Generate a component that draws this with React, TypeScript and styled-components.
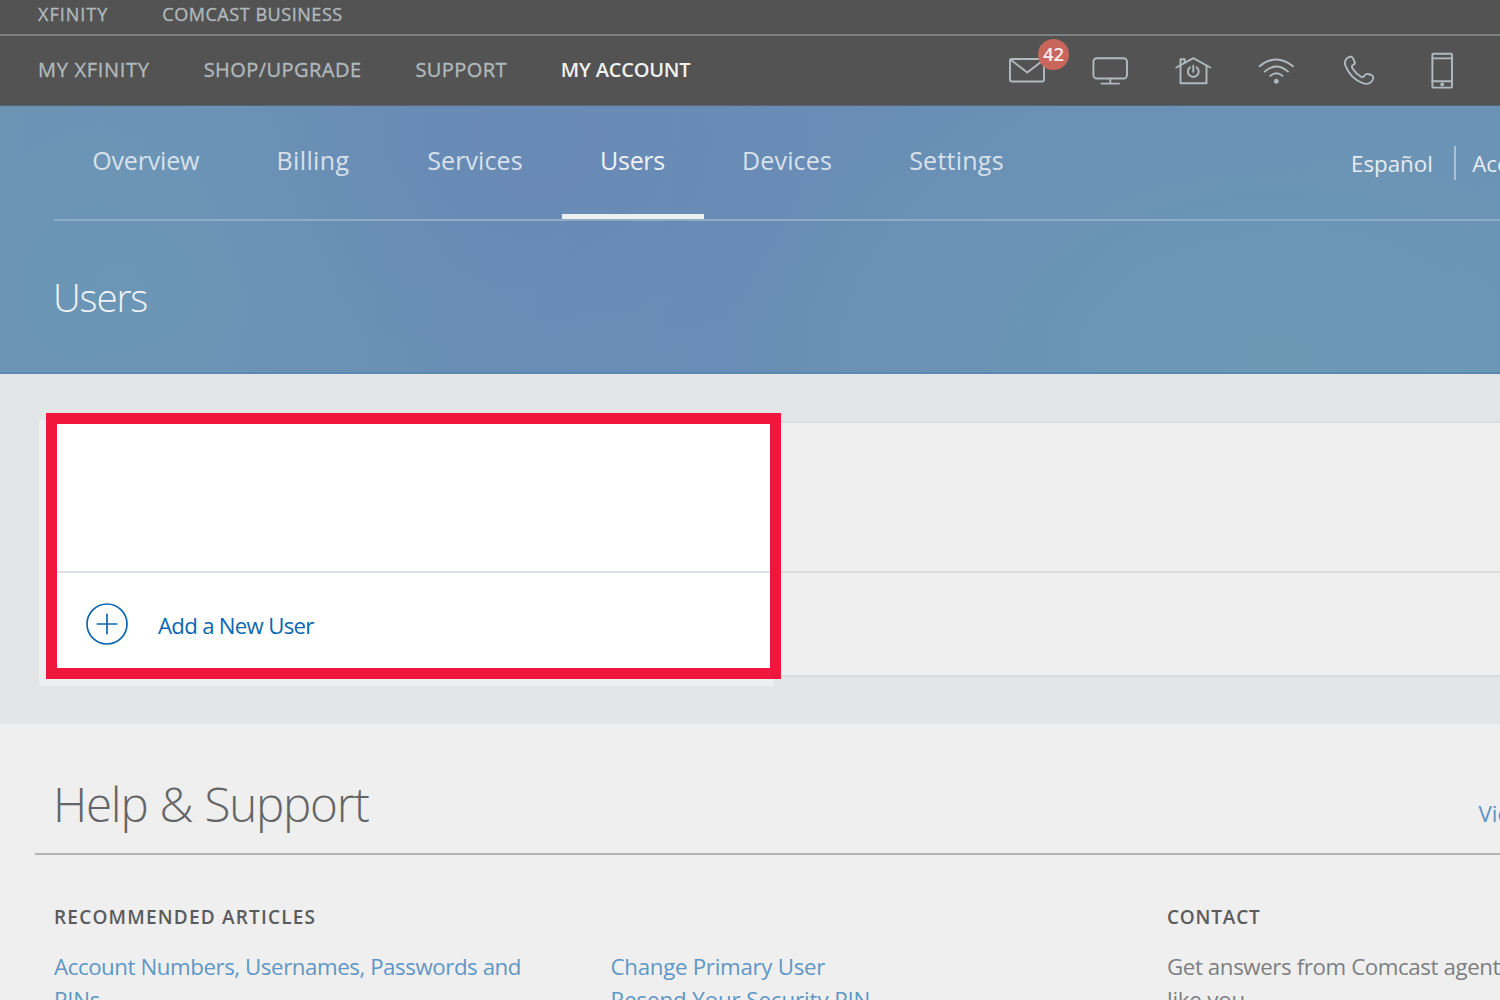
import React from "react";
import styled, { createGlobalStyle } from "styled-components";

const GlobalStyle = createGlobalStyle`
  *, *::before, *::after { box-sizing: border-box; }
  body {
    margin: 0;
    background: #efefef;
    font-family: "Open Sans", "Noto Sans", sans-serif;
  }
  a { color: inherit; text-decoration: none; }
`;

const Page = styled.div`
  width: 100%;
  height: 1000px;
  overflow: hidden;
  display: flex;
  flex-direction: column;
  background: #efefef;
`;

const SiteHeader = styled.header`
  flex: none;
  height: 106px;
  background: #535353;
  color: #b1b9bd;
  border-bottom: 1px solid #566370;
`;

const BrandBar = styled.div`
  display: flex;
  gap: 54px;
  height: 36px;
  padding-left: 38px;
  border-bottom: 2px solid #7c8182;
  font-size: 18px;
  line-height: 29px;
`;

const MainBar = styled.div`
  display: flex;
  justify-content: space-between;
  height: 69px;
  padding: 0 16.5px 0 38px;
`;

const MainNav = styled.nav`
  display: flex;
  gap: 54px;
  font-size: 20px;
  line-height: 68px;
`;

const SpacedLink = styled.a<{ $spacing: number; $active?: boolean }>`
  letter-spacing: ${(p) => p.$spacing}px;
  white-space: nowrap;
  color: ${(p) => (p.$active ? "#f2f2f2" : "inherit")};
  font-weight: ${(p) => (p.$active ? 600 : 400)};
  -webkit-text-stroke: ${(p) => (p.$active ? 0 : 0.35)}px currentColor;
`;

const IconNav = styled.div`
  display: flex;
  padding-top: 15px;
`;

const IconCell = styled.a`
  position: relative;
  width: 83px;
  height: 40px;
  display: flex;
  justify-content: center;
`;

const LineIcon = styled.svg`
  width: 40px;
  height: 40px;
  fill: none;
  stroke: #b1babf;
  stroke-width: 1.9;
  stroke-linecap: round;
  stroke-linejoin: round;
`;

const Badge = styled.span`
  position: absolute;
  left: 52.5px;
  top: -12px;
  width: 31px;
  height: 31px;
  border-radius: 50%;
  background: #c9665c;
  color: #f3eeee;
  font-size: 18.5px;
  font-weight: 600;
  line-height: 30px;
  text-align: center;
`;

const Hero = styled.section`
  flex: none;
  height: 268px;
  padding-left: 54px;
  border-bottom: 2px solid #5a8ab3;
  background:
    radial-gradient(ellipse 340px 300px at 530px 30px, #688ab6 0%, #688ab600 100%),
    radial-gradient(ellipse 340px 280px at 120px 180px, #6c96b5 0%, #6c96b500 100%),
    radial-gradient(ellipse 560px 340px at 1280px 250px, #6c98b4 0%, #6c98b4c0 35%, #6c98b400 100%),
    linear-gradient(100deg, #6c93b5 0%, #698db6 50%, #6b91b6 100%);
`;

const TabBar = styled.div`
  display: flex;
  justify-content: space-between;
  height: 115px;
  border-bottom: 2px solid #8dacc6;
`;

const Tabs = styled.nav`
  display: flex;
  font-size: 25px;
  line-height: 108px;
`;

const Tab = styled.a<{ $width: number; $spacing: number; $active?: boolean }>`
  width: ${(p) => p.$width}px;
  text-align: center;
  letter-spacing: ${(p) => p.$spacing}px;
  color: ${(p) => (p.$active ? "#eff1f3" : "#d8e1ea")};
  border-bottom: ${(p) => (p.$active ? "5px solid #eeeff0" : "0")};
`;

const Utility = styled.div`
  display: flex;
  width: 149px;
  font-size: 22.3px;
  line-height: 115px;
  letter-spacing: 0;
  color: #e8ecf0;
  white-space: nowrap;
`;

const UtilityRule = styled.span`
  flex: none;
  width: 2px;
  height: 34px;
  margin: 40px 16px 0 21.5px;
  background: #aec1d3;
`;

const PageTitle = styled.h1`
  margin: 46px 0 0 -1px;
  font-size: 38.5px;
  font-weight: 300;
  line-height: 61px;
  letter-spacing: -1.1px;
  color: #f0f2f4;
`;

const UsersSection = styled.section`
  flex: none;
  display: flex;
  align-items: flex-start;
  height: 350px;
  padding: 39px 0 0 46px;
  background: #e4e5e7;
`;

const HighlightPanel = styled.div`
  flex: none;
  width: 735px;
  height: 266px;
  border: 11px solid #f0173c;
  background: #fff;
  box-shadow: -7px 7px 0 #eeeff1;
`;

const EmptyRow = styled.div`
  height: 149px;
  border-bottom: 2px solid #dee2e6;
`;

const AddRow = styled.a`
  display: flex;
  align-items: flex-start;
  height: 95px;
  padding: 30px 0 0 29px;
  color: #0b67b2;
`;

const AddIcon = styled.svg`
  width: 42px;
  height: 42px;
  margin-right: 30px;
  fill: none;
  stroke: #0b67b2;
  stroke-width: 1.7;
`;

const AddLabel = styled.span`
  font-size: 22.2px;
  line-height: 45px;
  letter-spacing: -0.7px;
`;

const CardRest = styled.div`
  flex: 1;
  margin-top: 8px;
  height: 256px;
  background: #efefef;
  border: solid #dadcde;
  border-width: 2px 0;
`;

const CardRestRow = styled.div`
  height: 150px;
  border-bottom: 2px solid #dadcde;
`;

const Support = styled.section`
  flex: 1;
  padding-left: 35px;
`;

const SupportHeader = styled.div`
  display: flex;
  justify-content: space-between;
  align-items: baseline;
  height: 131px;
  padding: 46px 0 0 18px;
  border-bottom: 2px solid #b4b4b4;
`;

const SupportTitle = styled.h2`
  margin: 0;
  font-size: 47.5px;
  font-weight: 300;
  line-height: 67px;
  letter-spacing: -1.2px;
  word-spacing: 1px;
  color: #636567;
`;

const ViewLink = styled.a`
  width: 21.5px;
  font-size: 22.3px;
  line-height: 33px;
  white-space: nowrap;
  color: #5a95c8;
`;

const SupportColumns = styled.div`
  display: grid;
  grid-template-columns: 556.5px 556.5px 1fr;
  padding: 47px 0 0 19px;
`;

const Column = styled.div`
  min-width: 0;
`;

const ColumnTitle = styled.h3<{ $spacing?: number }>`
  margin: 0 0 18px;
  height: 30px;
  font-size: 19px;
  font-weight: 600;
  line-height: 30px;
  letter-spacing: ${(p) => p.$spacing ?? 1.2}px;
  color: #5a5b5c;
`;

const TextLine = styled.p<{ $spacing: number; $tone?: "link" | "body" }>`
  margin: 0;
  font-size: 22.3px;
  line-height: 33px;
  letter-spacing: ${(p) => p.$spacing}px;
  white-space: nowrap;
  color: ${(p) => (p.$tone === "body" ? "#7d8082" : "#5f97c6")};
`;

export default function App() {
  return (
    <Page>
      <GlobalStyle />
      <SiteHeader>
        <BrandBar>
          <SpacedLink $spacing={1}>XFINITY</SpacedLink>
          <SpacedLink $spacing={0.55}>COMCAST BUSINESS</SpacedLink>
        </BrandBar>
        <MainBar>
          <MainNav>
            <SpacedLink $spacing={0.7}>MY XFINITY</SpacedLink>
            <SpacedLink $spacing={0.45}>SHOP/UPGRADE</SpacedLink>
            <SpacedLink $spacing={0.4}>SUPPORT</SpacedLink>
            <SpacedLink $spacing={-0.2} $active>MY ACCOUNT</SpacedLink>
          </MainNav>
          <IconNav>
            <IconCell>
              <LineIcon viewBox="0 0 40 40">
                <rect x="3" y="8" width="34" height="22.5" rx="1.5" />
                <path d="M4 9l16.3 12.5L36.5 9" />
              </LineIcon>
              <Badge>42</Badge>
            </IconCell>
            <IconCell>
              <LineIcon viewBox="0 0 40 40">
                <rect x="3.4" y="7.2" width="33.6" height="20.3" rx="3.5" />
                <path d="M20.3 27.5v5M11.4 32.6h17.6" />
              </LineIcon>
            </IconCell>
            <IconCell>
              <LineIcon viewBox="0 0 40 40">
                <path d="M3.3 16.5L20.3 7.2l17 9.3" />
                <path d="M7.5 15v17.3h26V15" />
                <path d="M7.5 13.5V8.3h4.2v2.8" />
                <path d="M17 16.3a5.4 5.4 0 1 0 6.6 0M20.3 14.8v6" />
              </LineIcon>
            </IconCell>
            <IconCell>
              <LineIcon viewBox="0 0 40 40">
                <path d="M3.6 15.2Q20.3 1.6 37 15.2M8.7 20.6Q20.3 10.4 32 20.6M14.3 24.9Q20.3 19.6 26.5 24.9" />
                <circle cx="20.3" cy="30.3" r="2" fill="#b1babf" strokeWidth="1" />
              </LineIcon>
            </IconCell>
            <IconCell>
              <LineIcon viewBox="0 0 40 40">
                <path d="M9.5 6.3C11.3 5.2 13 5.6 14 7.3L15.6 10.6C16.4 12.4 15.6 13.2 14 14C12.6 14.8 12.6 15.8 13.4 17.2C15.6 20.8 19 24 22.4 26C23.6 26.6 24.4 26.2 25.1 25C26 23.4 27.2 22.6 28.8 23L32.4 24C34.2 24.8 34.7 26.6 33.8 28.6C31.8 32.4 28 33.6 23.8 32.2C15.8 29.2 9.4 22 6.4 14.6C5.2 11.2 6.2 8.2 9.5 6.3Z" />
              </LineIcon>
            </IconCell>
            <IconCell>
              <LineIcon viewBox="0 0 40 40">
                <rect x="10.4" y="2.8" width="19.6" height="33.8" rx="0.8" />
                <path d="M10.4 7.4h19.6M10.4 30.2h19.6" />
                <circle cx="20.2" cy="33.5" r="1.3" fill="#b1babf" strokeWidth="1.2" />
              </LineIcon>
            </IconCell>
          </IconNav>
        </MainBar>
      </SiteHeader>

      <Hero>
        <TabBar>
          <Tabs>
            <Tab $width={183.5} $spacing={-0.15}>Overview</Tab>
            <Tab $width={151} $spacing={0.35}>Billing</Tab>
            <Tab $width={173} $spacing={0.1}>Services</Tab>
            <Tab $width={142} $spacing={-0.3} $active>Users</Tab>
            <Tab $width={167} $spacing={0.15}>Devices</Tab>
            <Tab $width={172} $spacing={0.25}>Settings</Tab>
          </Tabs>
          <Utility>
            <a>Español</a>
            <UtilityRule />
            <a>Account</a>
          </Utility>
        </TabBar>
        <PageTitle>Users</PageTitle>
      </Hero>

      <UsersSection>
        <HighlightPanel>
          <EmptyRow />
          <AddRow>
            <AddIcon viewBox="0 0 42 42">
              <circle cx="21" cy="21" r="20" />
              <path d="M10.7 21h20.6M21 10.7v20.6" />
            </AddIcon>
            <AddLabel>Add a New User</AddLabel>
          </AddRow>
        </HighlightPanel>
        <CardRest>
          <CardRestRow />
        </CardRest>
      </UsersSection>

      <Support>
        <SupportHeader>
          <SupportTitle>Help &amp; Support</SupportTitle>
          <ViewLink>View All</ViewLink>
        </SupportHeader>
        <SupportColumns>
          <Column>
            <ColumnTitle>RECOMMENDED ARTICLES</ColumnTitle>
            <TextLine $spacing={-0.44}>Account Numbers, Usernames, Passwords and</TextLine>
            <TextLine $spacing={-0.2}>PINs</TextLine>
          </Column>
          <Column>
            <ColumnTitle aria-hidden />
            <TextLine $spacing={-0.28}>Change Primary User</TextLine>
            <TextLine $spacing={-0.1}>Resend Your Security PIN</TextLine>
          </Column>
          <Column>
            <ColumnTitle $spacing={0.8}>CONTACT</ColumnTitle>
            <TextLine $spacing={-0.4} $tone="body">Get answers from Comcast agents</TextLine>
            <TextLine $spacing={-0.2} $tone="body">like you.</TextLine>
          </Column>
        </SupportColumns>
      </Support>
    </Page>
  );
}
